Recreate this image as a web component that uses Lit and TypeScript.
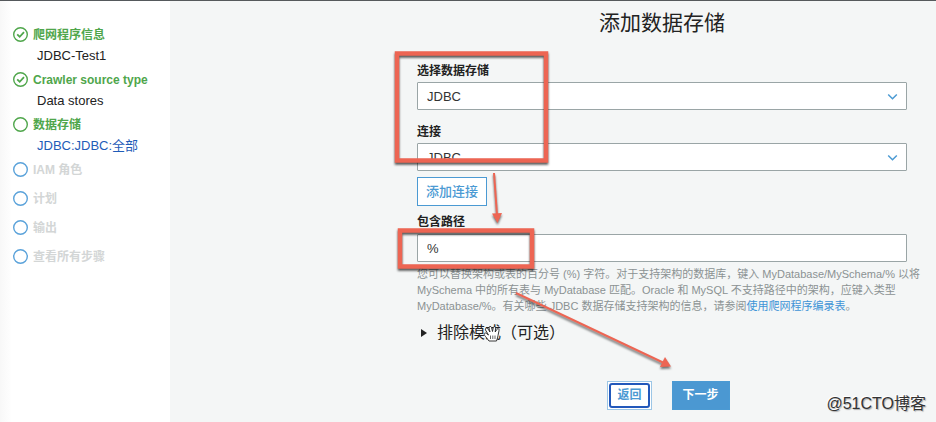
import { LitElement, html, svg, css, nothing } from "lit";
import { customElement, property } from "lit/decorators.js";

type StepState = "done" | "current" | "todo";

interface Step {
  title: string;
  state: StepState;
  detail?: string;
}

const STEPS: Step[] = [
  { title: "爬网程序信息", state: "done", detail: "JDBC-Test1" },
  { title: "Crawler source type", state: "done", detail: "Data stores" },
  { title: "数据存储", state: "current", detail: "JDBC:JDBC:全部" },
  { title: "IAM 角色", state: "todo" },
  { title: "计划", state: "todo" },
  { title: "输出", state: "todo" },
  { title: "查看所有步骤", state: "todo" },
];

@customElement("step-list")
export class StepList extends LitElement {
  @property({ attribute: false }) steps: Step[] = [];

  static styles = css`
    :host {
      display: block;
    }
    .list {
      list-style: none;
      margin: 0;
      padding: 0;
    }
    .heading {
      display: flex;
      align-items: center;
      gap: 5px;
      height: 23px;
      font-size: 12px;
      line-height: 22px;
      font-weight: 700;
      color: #4fa64b;
      white-space: nowrap;
    }
    .icon {
      flex: none;
      width: 15px;
      height: 15px;
      fill: none;
      stroke: currentColor;
      stroke-width: 1.4;
    }
    .detail {
      height: 22px;
      line-height: 20px;
      padding-left: 24px;
      font-size: 13px;
      color: #222;
      white-space: nowrap;
    }
    .current .detail {
      color: #1f5cb8;
    }
    .todo {
      padding-bottom: 6px;
    }
    .todo .heading {
      color: #d3d6d6;
    }
    .todo .icon {
      color: #5aa2da;
    }
  `;

  render() {
    return html`<ol class="list">
      ${this.steps.map(
        (s) => html`<li class=${s.state}>
          <div class="heading">
            <svg class="icon" viewBox="0 0 15 15" aria-hidden="true">
              <circle cx="7.5" cy="7.5" r="6.8"></circle>
              ${s.state === "done"
                ? svg`<path d="M4.2 7.3 6.7 9.8 11 5.2" stroke-width="1.8"></path>`
                : nothing}
            </svg>
            <span>${s.title}</span>
          </div>
          ${s.detail ? html`<div class="detail">${s.detail}</div>` : nothing}
        </li>`
      )}
    </ol>`;
  }
}

@customElement("app-root")
export class AppRoot extends LitElement {
  static styles = css`
    :host {
      display: block;
      position: relative;
      overflow: hidden;
      font-family: "Liberation Sans", "Noto Sans CJK SC", sans-serif;
      color: #222;
    }
    * {
      box-sizing: border-box;
    }
    .page {
      display: flex;
      min-height: 100vh;
      border-top: 1px solid #55595c;
      background: #f4f6f6;
    }
    .side {
      flex: 0 0 170px;
      padding: 22px 0 0 13px;
      background: linear-gradient(90deg, #f8f8f8, #fff 12px);
    }
    .main {
      flex: 1;
      min-width: 0;
      padding: 6px 29px 11px 247px;
    }
    .title {
      margin: 0 0 16px;
      font-size: 21px;
      line-height: 32px;
      font-weight: 400;
      text-align: center;
    }
    .field {
      margin-bottom: 6px;
    }
    .label {
      display: block;
      height: 27px;
      line-height: 32px;
      font-size: 12px;
      font-weight: 700;
    }
    .picker {
      position: relative;
    }
    .control {
      display: block;
      appearance: none;
      width: 100%;
      height: 28px;
      margin: 0;
      padding: 0 9px;
      border: 1px solid #9aa5a6;
      border-radius: 1px;
      background: #fff;
      font-family: inherit;
      font-size: 13px;
      color: #333;
      outline: none;
    }
    .chevron {
      position: absolute;
      right: 9px;
      top: 11px;
      width: 11px;
      height: 8px;
      fill: none;
      stroke: #4b9ad3;
      stroke-width: 1.5;
      pointer-events: none;
    }
    .btn {
      position: relative;
      height: 29px;
      padding: 0 9px;
      border: 1px solid #4b9ad3;
      background: #fff;
      color: #4b9ad3;
      font-family: inherit;
      font-size: 12px;
      line-height: 27px;
      font-weight: 700;
    }
    .add {
      display: block;
      font-size: 13px;
      font-weight: 500;
      padding: 0 8px;
    }
    .path-label {
      height: 28px;
    }
    .help {
      margin: 4px 0 0;
      font-size: 11px;
      line-height: 16px;
      color: #8b9293;
      white-space: nowrap;
    }
    .help a {
      color: #3f94d6;
      text-decoration: none;
    }
    .exclude {
      margin-top: 7px;
      font-size: 16px;
      line-height: 24px;
    }
    .summary {
      display: flex;
      align-items: center;
      gap: 10px;
      list-style: none;
      padding-left: 4px;
    }
    .summary::-webkit-details-marker {
      display: none;
    }
    .tri {
      width: 6px;
      height: 8px;
      fill: #222;
    }
    .actions {
      display: flex;
      justify-content: center;
      gap: 20px;
      margin-top: 36px;
      padding-left: 13px;
    }
    .back {
      border-color: #9cc6e6;
    }
    .back::after {
      content: "";
      position: absolute;
      inset: 1px;
      border: 2px solid #2258bb;
      border-radius: 3px;
    }
    .next {
      padding: 0 10px;
      background: #4b98d2;
      color: #fff;
    }
    .marks {
      position: absolute;
      left: 0;
      top: 0;
      width: 936px;
      height: 421px;
      pointer-events: none;
    }
    .stroke {
      fill: none;
      stroke: #ed6553;
      filter: drop-shadow(0 2px 1px rgba(0, 0, 0, 0.65));
    }
    .arrow {
      fill: #ed6553;
      stroke: #ed6553;
      filter: drop-shadow(0 2px 1px rgba(0, 0, 0, 0.55));
    }
    .credit {
      position: absolute;
      right: 10px;
      bottom: 6px;
      font-size: 16px;
      line-height: 24px;
      color: #333;
      text-shadow: -1px -1px 0 #fff, 1px 1px 1px #aaa;
    }
  `;

  private chevron() {
    return html`<svg class="chevron" viewBox="0 0 11 8" aria-hidden="true">
      <path d="M1.2 1.5 5.5 5.8 9.8 1.5"></path>
    </svg>`;
  }

  private picker(id: string, label: string) {
    return html`<div class="field">
      <label class="label" for=${id}>${label}</label>
      <div class="picker">
        <select class="control" id=${id}>
          <option>JDBC</option>
        </select>
        ${this.chevron()}
      </div>
    </div>`;
  }

  render() {
    return html`
      <div class="page">
        <nav class="side"><step-list .steps=${STEPS}></step-list></nav>
        <main class="main">
          <h1 class="title">添加数据存储</h1>
          ${this.picker("store", "选择数据存储")}
          ${this.picker("connection", "连接")}
          <button class="btn add" type="button">添加连接</button>
          <label class="label path-label" for="path">包含路径</label>
          <input class="control" id="path" type="text" value="%" />
          <p class="help">
            您可以替换架构或表的百分号 (%) 字符。对于支持架构的数据库，键入 MyDatabase/MySchema/% 以将<br />
            MySchema 中的所有表与 MyDatabase 匹配。Oracle 和 MySQL 不支持路径中的架构，应键入类型<br />
            MyDatabase/%。有关哪些 JDBC 数据存储支持架构的信息，请参阅<a href="#crawler">使用爬网程序编录表</a>。
          </p>
          <details class="exclude">
            <summary class="summary">
              <svg class="tri" viewBox="0 0 6 8" aria-hidden="true"><path d="M0 0 6 4 0 8z"></path></svg>
              排除模式（可选）
            </summary>
          </details>
          <div class="actions">
            <button class="btn back" type="button">返回</button>
            <button class="btn next" type="button">下一步</button>
          </div>
        </main>
      </div>
      <svg class="marks" viewBox="0 0 936 421" aria-hidden="true">
        <rect class="stroke" x="397" y="53.5" width="149" height="107" stroke-width="4.5"></rect>
        <rect class="stroke" x="400" y="230.5" width="132" height="36" stroke-width="4.5"></rect>
        <g class="arrow">
          <path d="M494 173 497 215" stroke-width="2"></path>
          <path d="M492 213.5 502 213 497.5 223z" stroke="none"></path>
        </g>
        <g class="arrow">
          <path d="M516 293 663 362.5" stroke-width="2"></path>
          <path d="M665 357 660 367 671 366.5z" stroke="none"></path>
        </g>
        <path
          d="M489 341 485.500 336.500C483 334 484.500 332 486.500 333.500L488.500 335 485.500 330C484.700 328.200 487 327.300 488 329L490 332 489 328C488.700 326.200 491 325.800 491.500 327.500L492.500 331.500 493.200 327.800C493.600 326 495.800 326.400 495.600 328.200L495.200 332 496.800 329.500C497.800 328 499.700 329 499 330.700L498 335.500C497.700 338 497 339 496.500 341z"
          fill="#fff" stroke="#222" stroke-width="0.9"
        ></path>
        <path d="M490.500 335.500V339M492.800 335.500V339M495 335.500V339" stroke="#222" stroke-width="0.7"></path>
      </svg>
      <div class="credit">@51CTO博客</div>
    `;
  }
}
